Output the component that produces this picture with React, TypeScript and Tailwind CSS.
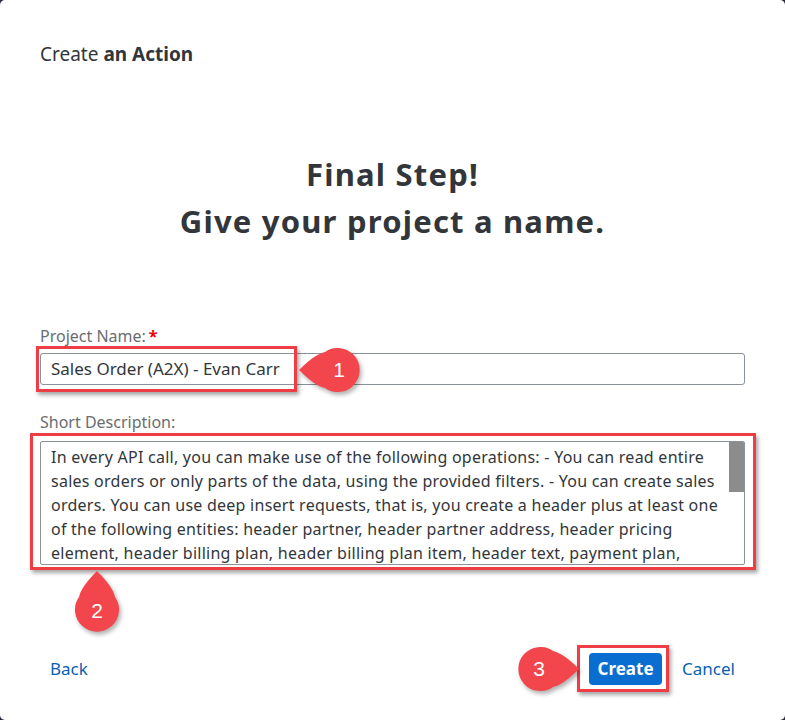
import React from "react";

const lines = [
  "In every API call, you can make use of the following operations: - You can read entire",
  "sales orders or only parts of the data, using the provided filters. - You can create sales",
  "orders. You can use deep insert requests, that is, you create a header plus at least one",
  "of the following entities: header partner, header partner address, header pricing",
  "element, header billing plan, header billing plan item, header text, payment plan,",
];

const paths: Record<string, string> = {
  left: "M4 25 Q20 9 30 7 A22 22 0 1 1 30 43 Q20 41 4 25 Z",
  up: "M25 4 Q9 20 7 30 A22 22 0 1 0 43 30 Q41 20 25 4 Z",
  right: "M66 25 Q50 9 40 7 A22 22 0 1 0 40 43 Q50 41 66 25 Z",
};

function Callout({ num, dir }: { num: string; dir: "left" | "up" | "right" }) {
  const w = dir === "up" ? 50 : 70;
  const h = dir === "up" ? 70 : 50;
  const cx = dir === "left" ? 44 : dir === "up" ? 25 : 26;
  const cy = dir === "up" ? 44 : 25;
  return (
    <div className="relative" style={{ width: w, height: h }}>
      <svg width={w} height={h} viewBox={`0 0 ${w} ${h}`} className="absolute inset-0 overflow-visible" style={{ filter: "drop-shadow(2px 3px 2px rgba(0,0,0,0.3))" }}>
        <path d={paths[dir]} fill="#f2464c" />
      </svg>
      <span className="absolute w-[40px] h-[40px] flex items-center justify-center text-white text-[21px] font-['Liberation_Sans',sans-serif]" style={{ left: cx - 20, top: cy - 20 }}>
        {num}
      </span>
    </div>
  );
}

export default function App() {
  return (
    <div className="w-[785px] h-[720px] bg-[#2b2640]">
      <div className="relative w-[785px] h-[720px] bg-white rounded-[5px] font-['Noto_Sans',sans-serif] text-[#32363a] flex flex-col px-[40px]">
        <div className="pt-[42px] text-[19px] leading-[24px] text-[#32363a]">
          Create <span className="font-bold">an Action</span>
        </div>
        <div className="mt-[85px] text-center font-['Noto_Sans',sans-serif] font-bold text-[31px] leading-[47px] tracking-[1.2px] text-[#32363a]">
          <div>Final Step!</div>
          <div>Give your project a name.</div>
        </div>
        <div className="mt-[82px] text-[16px] leading-[18px] text-[#6a6d70]">
          Project Name:<span className="text-[#e00] font-bold ml-[3px]">*</span>
        </div>
        <div className="mt-[8px] mr-0 h-[32px] w-[705px] border border-[#89919a] rounded-[3px] flex items-center px-[10px] text-[17px] text-[#32363a]">
          Sales Order (A2X) - Evan Carr
        </div>
        <div className="mt-[28px] text-[16px] leading-[18px] text-[#6a6d70]">Short Description:</div>
        <div className="mt-[10px] h-[124px] w-[705px] border border-[#89919a] rounded-[2px] flex overflow-hidden">
          <div className="flex-1 pl-[10px] pt-[3px] text-[16px] leading-[24px] tracking-[0.25px] text-[#32363a] whitespace-nowrap overflow-hidden">
            {lines.map((l) => (
              <div key={l}>{l}</div>
            ))}
          </div>
          <div className="w-[15px] flex flex-col">
            <div className="h-[50px] bg-[#8c8c8c]" />
          </div>
        </div>
        <div className="mt-[88px] flex items-center">
          <span className="ml-[10px] text-[17px] text-[#0a5fb4]">Back</span>
          <div className="flex-1" />
          <button className="h-[32px] w-[73px] rounded-[4px] bg-[#0a6ed1] text-white font-bold text-[17px]">Create</button>
          <span className="ml-[20px] mr-[10px] text-[17px] text-[#0a5fb4]">Cancel</span>
        </div>

        {/* annotations */}
        <div className="absolute left-[36px] top-[346px] w-[261px] h-[46px] border-[3px] border-[#ee3d45] shadow-[2px_3px_4px_rgba(0,0,0,0.35)]" />
        <div className="absolute left-[30px] top-[433px] w-[726px] h-[137px] border-[3px] border-[#ee3d45] shadow-[2px_3px_4px_rgba(0,0,0,0.35)]" />
        <div className="absolute left-[577px] top-[645px] w-[92px] h-[47px] border-[3px] border-[#ee3d45] shadow-[2px_3px_4px_rgba(0,0,0,0.35)]" />
        <div className="absolute left-[295px] top-[345px]">
          <Callout num="1" dir="left" />
        </div>
        <div className="absolute left-[72px] top-[567px]">
          <Callout num="2" dir="up" />
        </div>
        <div className="absolute left-[513px] top-[644px]">
          <Callout num="3" dir="right" />
        </div>
      </div>
    </div>
  );
}
